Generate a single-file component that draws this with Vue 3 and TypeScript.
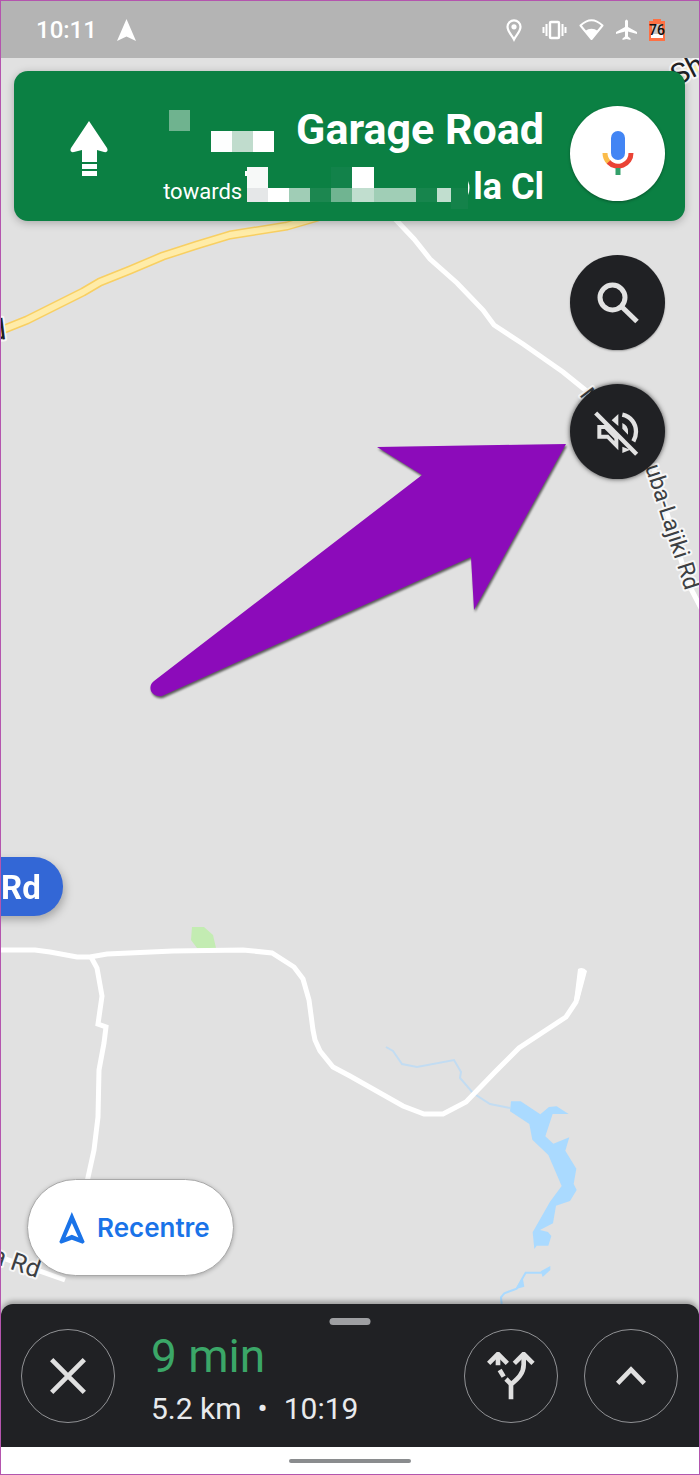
<script setup lang="ts">
interface Block {
  x: number
  y: number
  w: number
  h: number
  fill: string
}

const roadBlocks: Block[] = [
  { x: 0, y: 0, w: 21, h: 21, fill: '#6fb38f' },
  { x: 42, y: 21, w: 21, h: 21, fill: '#fdfefe' },
  { x: 63, y: 21, w: 21, h: 21, fill: '#c0dccd' },
  { x: 84, y: 21, w: 21, h: 21, fill: '#ffffff' },
]

const towardsBlocks: Block[] = [
  { x: 0, y: 4, w: 3, h: 5, fill: '#ffffff' },
  { x: 2, y: 0, w: 21, h: 21, fill: '#f7f9f8' },
  { x: 86, y: 0, w: 21, h: 21, fill: '#12824a' },
  { x: 107, y: 0, w: 22, h: 21, fill: '#ffffff' },
  { x: 2, y: 21, w: 21, h: 14, fill: '#e5e7e8' },
  { x: 23, y: 21, w: 21, h: 14, fill: '#ffffff' },
  { x: 44, y: 21, w: 21, h: 14, fill: '#a0cdb6' },
  { x: 65, y: 21, w: 21, h: 14, fill: '#1c8750' },
  { x: 86, y: 21, w: 21, h: 14, fill: '#70b491' },
  { x: 107, y: 21, w: 22, h: 14, fill: '#c1decf' },
  { x: 129, y: 21, w: 42, h: 14, fill: '#a0ceb6' },
  { x: 171, y: 21, w: 21, h: 14, fill: '#17854d' },
  { x: 192, y: 21, w: 14, h: 14, fill: '#c1decf' },
  { x: 206, y: 21, w: 17, h: 21, fill: '#14824a' },
]
</script>

<template>
  <div class="phone">
    <svg class="map" viewBox="0 0 700 1475" preserveAspectRatio="xMidYMin slice" aria-hidden="true">
      <!-- main road -->
      <g fill="none" stroke-linejoin="round">
        <path class="highway-edge" d="M-6 333L7 328L27 320L47 310L83 292L100 282L130 270L163 256L197 245L230 235L287 226L318 217" />
        <path class="highway" d="M-6 333L7 328L27 320L47 310L83 292L100 282L130 270L163 256L197 245L230 235L287 226L318 217" />
        <path class="highway" d="M678 74L705 66" />
      </g>
      <!-- water -->
      <path class="stream" d="M386 1047L393 1051L402 1064L417 1067L454 1060L461 1072L460 1078L473 1093L490 1104L510 1108" />
      <g transform="translate(350 940) scale(0.33333)" fill="#aadaff">
        <path d="M483 484H512L571 523L597 501L620 499L656 522H608L586 589L610 611L658 592L646 632L679 686L671 732L680 750L660 783L618 797L609 850L570 870L594 876L604 888L595 917H560L553 927L548 877L600 785L635 738L595 645L547 599L538 552L480 514Z" />
        <path d="M518 1012L523 1040L496 1048ZM572 994L601 978V990L578 1011Z" />
        <path d="M455 1092L453 1072L463 1060L500 1046L520 1010L527 998H575" fill="none" stroke="#aadaff" stroke-width="6" />
      </g>
      <path d="M192 927H204L213 935L216 948H197L191 940Z" fill="#c3ecb2" />
      <!-- minor roads -->
      <g class="road">
        <path d="M390 214L397 221L414 239L430 259L457 283L483 310L494 325L523 344L563 372L584 389L640 440L655 472L672 530L688 583L702 610" />
        <path d="M0 950H35L50 952L77 957H90L107 954L173 951L243 950L272 953L294 967L303 979L309 1000L313 1030L315 1040L320 1051L333 1067L350 1076L403 1106L424 1114H443L466 1102L495 1072L519 1048L566 1017L576 1002L583 971" />
        <path d="M91 957L97 968L102 996L98 1024L106 1027L104 1043L99 1070L98 1117L94 1150L87 1182" />
        <path d="M0 1257L65 1280" />
      </g>
      <path d="M578 969Q583 966 587 971L579 1001H574Z" fill="#fff" />
      <!-- road names -->
      <g class="label">
        <text class="major" transform="translate(677 86) rotate(-27)" font-size="29">Sh</text>
        <text class="major" transform="translate(7 339) rotate(-7)" font-size="29" text-anchor="end">d</text>
        <text transform="translate(579 395) rotate(53)" font-size="22">M</text>
        <text transform="translate(645 467) rotate(72)" font-size="23">uba-Lajiki Rd</text>
        <text transform="translate(37 1278) rotate(19)" font-size="25" text-anchor="end">a Rd</text>
      </g>
      <g class="pill">
        <rect x="-80" y="857" width="143" height="59" rx="29" />
        <text x="1" y="899">Rd</text>
      </g>
      <path class="pointer" d="M566 444L377 447L422 475L154 681Q149 685 151 691Q154 697 162 696L471 557L474 610Z" />
    </svg>

    <header class="status">
      <div class="status-left">
        <time>10:11</time>
        <svg width="19" height="22" viewBox="0 0 19 22"><path d="M9.500 0L19 22L9.500 17.500L0 22Z" fill="#fff" /></svg>
      </div>
      <div class="status-right">
        <svg class="pin" width="18" height="24" viewBox="0 0 18 24" fill="none" stroke="#fff" stroke-width="2.200">
          <path d="M9 21.500C7 17.500 2.500 13.500 2.500 8.800A6.500 6.500 0 0 1 15.500 8.800C15.500 13.500 11 17.500 9 21.500Z" />
          <circle cx="9" cy="8.800" r="2.600" fill="#fff" stroke="none" />
        </svg>
        <svg width="25" height="24" viewBox="0 0 25 24" fill="none" stroke="#fff" stroke-width="2">
          <rect x="8" y="4" width="9" height="16" rx="1" stroke-width="2.400" />
          <path d="M4.500 6V18M1.500 9V15M20.500 6V18M23.500 9V15" />
        </svg>
        <svg width="25" height="24" viewBox="0 0 25 24">
          <path d="M1.500 7.500Q12.500 -3 23.500 7.500L12.500 21Z" fill="none" stroke="#fff" stroke-width="2" stroke-linejoin="round" />
          <path d="M6 13Q12.500 8.500 19 13L12.500 21.500Z" fill="#fff" />
        </svg>
        <svg width="21" height="24" viewBox="0 0 21 24">
          <path d="M9 3Q10.500 0 12 3V9L21 14V16L12 13.500V18.500L14.500 20.500V22L10.500 21L6.500 22V20.500L9 18.500V13.500L0 16V14L9 9Z" fill="#fff" />
        </svg>
        <svg width="16" height="24" viewBox="0 0 16 24" role="img" aria-label="Battery 76">
          <path d="M4 1H12V3H16V23H0V3H4Z" fill="#ff7043" />
          <path d="M3 6H13V16H3Z" fill="#c9c4c2" />
          <path d="M2 16H14V20H2Z" fill="#fff" />
          <text x="8" y="17" text-anchor="middle" class="battery-text">76</text>
        </svg>
      </div>
    </header>

    <main class="stage">
      <section class="direction">
        <svg class="ahead" width="38" height="56" viewBox="0 0 38 56" fill="#fff">
          <path d="M19 0L37 27Q39 32 34 31L27 29V41H12V29L4 31Q-1 32 1 27ZM12 43H27V48H12ZM12 50H27V55H12Z" />
        </svg>
        <div class="route">
          <div class="row">
            <svg width="105" height="42" viewBox="0 0 105 42" aria-hidden="true">
              <rect v-for="(b, i) in roadBlocks" :key="i" :x="b.x" :y="b.y" :width="b.w" :height="b.h" :fill="b.fill" />
            </svg>
            <h1>Garage Road</h1>
          </div>
          <div class="row second">
            <span class="towards">towards</span>
            <svg width="225" height="42" viewBox="0 0 225 42" aria-hidden="true">
              <rect v-for="(b, i) in towardsBlocks" :key="i" :x="b.x" :y="b.y" :width="b.w" :height="b.h" :fill="b.fill" />
              <path d="M223 14Q226 21 223 28Z" fill="#fff" />
            </svg>
            <strong>la Cl</strong>
          </div>
        </div>
        <button class="round mic" type="button" aria-label="Voice search">
          <svg width="48" height="48" viewBox="0 0 48 48" fill="none">
            <rect x="17" y="2" width="14" height="29" rx="7" fill="#4285f4" />
            <path d="M11 24A13 13 0 0 0 15 33.500" stroke="#fbbc4a" stroke-width="5" />
            <path d="M14.500 33A13 13 0 0 0 37 24" stroke="#ea4335" stroke-width="5" />
            <path d="M24 39V46" stroke="#34a06a" stroke-width="5" />
          </svg>
        </button>
      </section>

      <div class="tools">
        <button class="round dark" type="button" aria-label="Search">
          <svg width="48" height="48" viewBox="0 0 48 48" fill="none" stroke="#e2e2e2" stroke-width="5">
            <circle cx="18.500" cy="18.500" r="12.500" />
            <path d="M28 28L43 42.500" />
          </svg>
        </button>
        <button class="round dark mute" type="button" aria-label="Muted">
          <svg width="48" height="48" viewBox="281 500 144 144" fill="#e2e2e2">
            <path fill-rule="evenodd" d="M291 551H316L354 589V627L320 592H291ZM303 563V580H324L342 599V592L313 563Z" />
            <path d="M334 537L354 518V554ZM366 545Q383 552 383 570V580L366 562ZM366 616L390 625L366 635Z" />
            <path d="M366 520C392 526 407 546 407 571C407 582 404 591 399 600" fill="none" stroke="#e2e2e2" stroke-width="13" />
            <path d="M293 508L418 633" fill="none" stroke="#202124" stroke-width="7" />
            <path d="M286 515L409 639" fill="none" stroke="#e2e2e2" stroke-width="13" />
          </svg>
        </button>
      </div>

      <button class="recentre" type="button">
        <svg width="26" height="32" viewBox="177 154 77 97" aria-hidden="true">
          <path fill-rule="evenodd" fill="#1a73e8" d="M215 154L254 245L248 250L215 238L182 250L177 245ZM215 187L196 231L215 223L235 231Z" />
        </svg>
        <span>Recentre</span>
      </button>
    </main>

    <footer class="sheet">
      <span class="grip"></span>
      <button class="ring" type="button" aria-label="Close">
        <svg width="48" height="48" viewBox="134 575 144 144"><path d="M157 598L255 696M255 598L157 696" /></svg>
      </button>
      <div class="eta">
        <p class="duration">9 min</p>
        <p class="details"><span>5.2 km</span><span>•</span><span>10:19</span></p>
      </div>
      <button class="ring" type="button" aria-label="Alternative routes">
        <svg width="48" height="48" viewBox="411 334 144 144">
          <path d="M483 476V428M480 434C498 418 521 402 521 372V346" />
          <path d="M493 368L521 340L549 368M416 368L444 340L472 368" />
          <path d="M444 346V374M449 388L461 408M468 415L484 431" />
        </svg>
      </button>
      <button class="ring" type="button" aria-label="Expand">
        <svg width="48" height="48" viewBox="772 334 144 144"><path d="M804 428L844 387L884 428" /></svg>
      </button>
    </footer>
    <div class="home"><span></span></div>
  </div>
</template>

<style>
body {
  margin: 0;
}
</style>

<style scoped>
.phone {
  position: relative;
  display: flex;
  flex-direction: column;
  box-sizing: border-box;
  min-height: 100vh;
  overflow: hidden;
  border: 1px solid #b455ae;
  background: #e1e1e1;
  font-family: Roboto, "Liberation Sans", sans-serif;
}

svg {
  display: block;
  flex: none;
}

button {
  padding: 0;
  border: 0;
  font: inherit;
  cursor: pointer;
}

.map {
  position: absolute;
  top: -1px;
  left: -1px;
  width: calc(100% + 2px);
  height: calc(100% + 2px);
}

.highway-edge {
  stroke: #f8cf62;
  stroke-width: 9;
}

.highway {
  stroke: #ffeca8;
  stroke-width: 6;
}

.stream {
  fill: none;
  stroke: #c2dcf2;
  stroke-width: 2;
}

.road {
  fill: none;
  stroke: #fff;
  stroke-width: 5;
}

.label {
  fill: #3c4043;
  stroke: #f7f7f7;
  stroke-width: 4;
  stroke-linejoin: round;
  paint-order: stroke;
}

.major {
  fill: #202124;
}

.pill {
  filter: drop-shadow(2px 4px 4px rgba(0, 0, 0, 0.25));
}

.pill rect {
  fill: #3367d6;
}

.pill text {
  fill: #fff;
  font-size: 33px;
  font-weight: 700;
}

.pointer {
  fill: #8c0bba;
  filter: drop-shadow(1px 2px 1px rgba(0, 0, 0, 0.6));
}

.status {
  position: relative;
  display: flex;
  align-items: center;
  justify-content: space-between;
  height: 57px;
  padding: 0 34px 0 35px;
  background: #b4b4b4;
  color: #fff;
}

.status-left,
.status-right {
  display: flex;
  align-items: center;
}

.status-left {
  gap: 20px;
  font-size: 24px;
  font-weight: 500;
  line-height: 28px;
}

.status-right {
  gap: 12px;
}

.pin {
  margin-right: 7px;
}

.battery-text {
  fill: #111;
  font-size: 14px;
  font-weight: 500;
}

.stage {
  position: relative;
  display: flex;
  flex: 1;
  flex-direction: column;
  padding: 13px 14px 28px 13px;
}

.direction {
  display: flex;
  align-items: center;
  justify-content: space-between;
  box-sizing: border-box;
  min-height: 150px;
  padding: 0 20px 0 56px;
  border-radius: 14px;
  background: #0b8043;
  box-shadow: 0 2px 8px rgba(0, 0, 0, 0.25);
  color: #fff;
}

.ahead {
  margin-top: 6px;
}

.route {
  display: flex;
  flex: 1;
  flex-direction: column;
  gap: 13px;
  margin-right: 26px;
  padding-top: 23px;
}

.row {
  display: flex;
  align-items: flex-end;
  justify-content: flex-end;
  gap: 22px;
}

h1 {
  margin: 0;
  font-size: 43px;
  font-weight: 700;
  line-height: 46px;
  white-space: nowrap;
}

.second {
  gap: 3px;
}

.towards {
  font-size: 22px;
  line-height: 34px;
}

.second strong {
  font-size: 36px;
  font-weight: 700;
  line-height: 44px;
  white-space: nowrap;
}

.round {
  display: grid;
  flex: none;
  place-items: center;
  width: 95px;
  height: 95px;
  border-radius: 50%;
}

.mic {
  margin-top: 14px;
  background: #fff;
  box-shadow: 0 1px 3px rgba(0, 0, 0, 0.35);
}

.tools {
  display: flex;
  flex-direction: column;
  align-self: flex-end;
  gap: 34px;
  margin: 34px 20px 0 0;
}

.dark {
  background: #202124;
  box-shadow: 0 1px 2px rgba(0, 0, 0, 0.3);
}

.mute {
  box-shadow: 0 0 5px rgba(0, 0, 0, 0.7);
}

.recentre {
  display: flex;
  align-items: center;
  align-self: flex-start;
  gap: 12px;
  box-sizing: border-box;
  height: 97px;
  margin: auto 0 0 13px;
  padding: 0 23px 0 31px;
  border: 1px solid #a8a8a8;
  border-radius: 49px;
  background: #fff;
  box-shadow: 0 1px 4px rgba(0, 0, 0, 0.25);
  color: #1a73e8;
  font-family: Inter, Roboto, sans-serif;
  font-size: 26px;
  font-weight: 600;
}

.sheet {
  position: relative;
  display: flex;
  align-items: center;
  gap: 26px;
  height: 143px;
  padding: 0 21px 0 20px;
  border-radius: 12px 12px 0 0;
  background: #202124;
  box-shadow: 0 -3px 5px rgba(0, 0, 0, 0.3);
}

.grip {
  position: absolute;
  top: 14px;
  left: 50%;
  width: 41px;
  height: 7px;
  border-radius: 4px;
  background: #9e9fa2;
  transform: translateX(-50%);
}

.ring {
  display: grid;
  flex: none;
  place-items: center;
  box-sizing: border-box;
  width: 94px;
  height: 94px;
  border: 1px solid #919295;
  border-radius: 50%;
  background: transparent;
}

.ring path {
  fill: none;
  stroke: #e0e0e0;
  stroke-width: 14px;
}

.eta {
  flex: 1;
  padding: 10px 0 0 10px;
}

.eta p {
  margin: 0;
  white-space: nowrap;
}

.duration {
  color: #3ba768;
  font-size: 46px;
  line-height: 56px;
}

.details {
  display: flex;
  gap: 16px;
  color: #e8eaed;
  font-size: 30px;
  line-height: 50px;
}

.home {
  position: relative;
  display: grid;
  place-items: center;
  height: 27px;
  background: #fff;
}

.home span {
  width: 122px;
  height: 4px;
  border-radius: 2px;
  background: #8a8c8e;
}
</style>
